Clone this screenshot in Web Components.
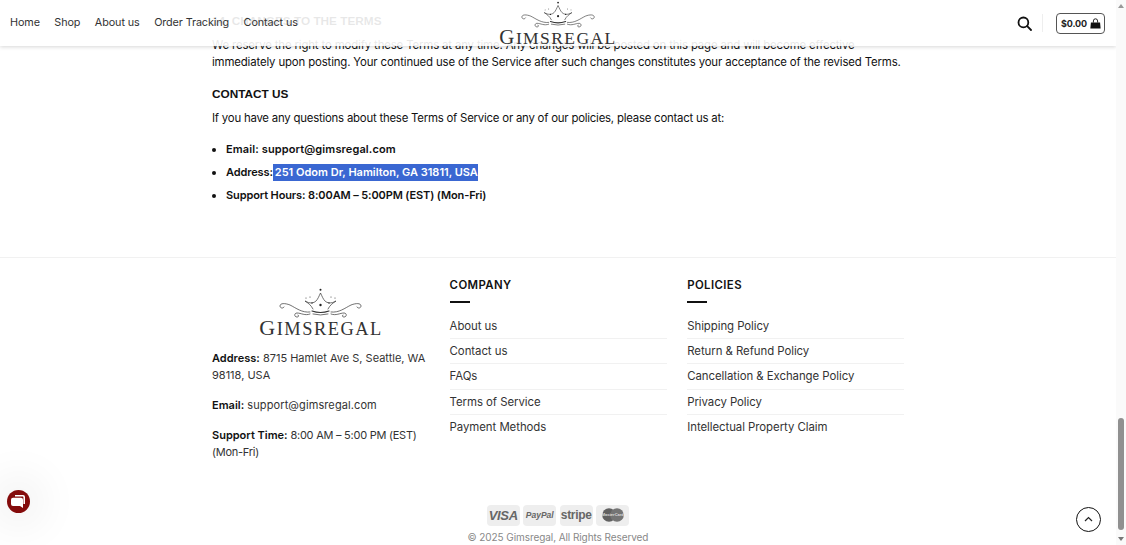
<!DOCTYPE html>
<html lang="en">
<head>
<meta charset="utf-8">
<title>Gimsregal</title>
<style>
    html, body { margin: 0; height: 100%; overflow: hidden; background: #fff; }
    body { font-family: Inter, "Open Sans", sans-serif; color: #111; }
    gims-page { height: 545px; }
</style>
</head>
<body>
<gims-page>
    <gims-header></gims-header>
    <legal-section></legal-section>
    <site-footer></site-footer>
</gims-page>
<chat-bubble></chat-bubble>
<back-top></back-top>

<script>
const CROWN = `
    <g fill="none" stroke="#333" stroke-width=".7" stroke-linecap="round">
        <path d="M34 21C32 17 29 15 26 13C31 16 35 15 37 13C39 11 40 8 41.5 5C43 8 44 11 46 13C48 15 52 16 57 13C54 15 51 17 49 21"/>
        <path stroke-width="1.2" d="M33 23Q41.5 26 50 23"/>
        <path d="M34 26Q41.5 28 49 26"/>
        <path d="M31 24C23 25 17 20 11 17C6 15 1 15 1 18C1 20 4 21 5 19"/>
        <path d="M31 26C26 28 22 25 18 25C15 25 15 29 18 29C20 29 20 27 19 27"/>
        <path transform="matrix(-1 0 0 1 83 0)" d="M31 24C23 25 17 20 11 17C6 15 1 15 1 18C1 20 4 21 5 19"/>
        <path transform="matrix(-1 0 0 1 83 0)" d="M31 26C26 28 22 25 18 25C15 25 15 29 18 29C20 29 20 27 19 27"/>
    </g>
    <g fill="#222">
        <circle cx="41.5" cy="1.8" r="1"/>
        <circle cx="41.5" cy="17" r="1.2"/>
        <circle cx="33" cy="15" r=".7"/><circle cx="50" cy="15" r=".7"/>
        <circle cx="27" cy="10" r=".5"/><circle cx="56" cy="10" r=".5"/>
        <circle cx="31" cy="9" r=".5"/><circle cx="52" cy="9" r=".5"/>
    </g>`;

class GimsLogo extends HTMLElement {
    connectedCallback() {
        const width = Number(this.getAttribute('width') || 122);
        const crown = Number(this.getAttribute('crown') || 84);
        const k = width / 122;
        this.attachShadow({ mode: 'open' }).innerHTML = `
            <style>
                :host { display: flex; flex-direction: column; align-items: center; width: ${width}px; color: #333; }
                svg { display: block; width: ${crown}px; height: ${crown * 30 / 84}px; }
                .name { font: ${18.4 * k}px/${17 * k}px "Liberation Serif", serif; letter-spacing: ${1.5 * k}px; white-space: nowrap; margin-top: ${1 * k}px; }
                .name b { font-weight: 400; font-size: ${22 * k}px; }
            </style>
            <svg viewBox="0 0 84 30" aria-hidden="true">${CROWN}</svg>
            <div class="name"><b>G</b>IMSREGAL</div>`;
    }
}

class GimsHeader extends HTMLElement {
    connectedCallback() {
        const links = ['Home', 'Shop', 'About us', 'Order Tracking', 'Contact us'];
        this.attachShadow({ mode: 'open' }).innerHTML = `
            <style>
                :host {
                    display: block; position: absolute; left: 0; right: 0; top: 0; height: 46px;
                    background: rgba(255,255,255,.9); box-shadow: 0 1px 4px rgba(0,0,0,.16);
                    font: 10.8px/1 Inter, sans-serif; letter-spacing: -.1px; color: #333; z-index: 5;
                }
                .bar { display: flex; align-items: center; justify-content: space-between; height: 100%; padding: 0 11px 0 10px; position: relative; }
                nav { display: flex; gap: 14.5px; }
                .logo { position: absolute; left: 500px; top: 1px; }
                .tools { display: flex; align-items: center; }
                .search { display: block; width: 15px; height: 15px; }
                .sep { width: 1px; height: 18px; background: #eee; margin: 0 13px 0 10px; }
                .cart {
                    display: flex; align-items: center; gap: 3px; height: 19px; padding: 0 3px 0 4px;
                    border: 1px solid #555; border-radius: 4px; font-size: 9px; letter-spacing: -.1px; font-weight: 700; color: #222;
                }
                .cart svg { width: 11px; height: 11px; display: block; }
            </style>
            <div class="bar">
                <nav>${links.map(link => `<span>${link}</span>`).join('')}</nav>
                <gims-logo class="logo" width="116" crown="75"></gims-logo>
                <div class="tools">
                    <svg class="search" viewBox="0 0 15 15" fill="none" stroke="#111" stroke-width="1.8" stroke-linecap="round"><circle cx="6.4" cy="6.4" r="4.9"/><path d="M10.2 10.2L14 14"/></svg>
                    <span class="sep"></span>
                    <div class="cart"><span>$0.00</span>
                        <svg viewBox="0 0 12 12"><path fill="#111" d="M1 5h10l.6 6.5H.4z"/><path fill="none" stroke="#111" d="M3.7 5V3.2a2.3 2.3 0 014.6 0V5"/></svg>
                    </div>
                </div>
            </div>`;
    }
}

class LegalSection extends HTMLElement {
    connectedCallback() {
        this.attachShadow({ mode: 'open' }).innerHTML = `
            <style>
                :host { display: block; padding: 13px 0 0 212px; width: 692px; font-size: 11.4px; line-height: 17px; color: #111; height: 244px; box-sizing: content-box; }
                h3 { margin: 0; font: 700 11.8px/17px "Liberation Sans", sans-serif; color: #111; }
                p { margin: 0; }
                .first { margin-top: 7px; white-space: nowrap; letter-spacing: -.145px; }
                .second { margin-top: 15px; }
                .intro { margin-top: 7px; letter-spacing: -.22px; white-space: nowrap; }
                ul { margin: 14px 0 0; padding: 0 0 0 14px; font-weight: 600; font-size: 11px; letter-spacing: -.12px; }
                li { margin-bottom: 6px; white-space: nowrap; }
                .mail { letter-spacing: .12px; }
                mark { background: #3a67d2; color: #fff; padding: 0 0 0 2px; display: inline-block; letter-spacing: 0; }
            </style>
            <h3>14. CHANGES TO THE TERMS</h3>
            <p class="first">We reserve the right to modify these Terms at any time. Any changes will be posted on this page and will become effective<br>immediately upon posting. Your continued use of the Service after such changes constitutes your acceptance of the revised Terms.</p>
            <h3 class="second">CONTACT US</h3>
            <p class="intro">If you have any questions about these Terms of Service or any of our policies, please contact us at:</p>
            <ul>
                <li class="mail">Email: support@gimsregal.com</li>
                <li>Address:<mark>251 Odom Dr, Hamilton, GA 31811, USA</mark></li>
                <li>Support Hours: 8:00AM – 5:00PM (EST) (Mon-Fri)</li>
            </ul>`;
    }
}

class FooterCol extends HTMLElement {
    connectedCallback() {
        const items = this.dataset.links.split(',').map(item => item.trim());
        this.attachShadow({ mode: 'open' }).innerHTML = `
            <style>
                :host { display: block; }
                h4 { margin: 0; font-size: 11.4px; line-height: 14px; font-weight: 600; letter-spacing: .4px; color: #111; }
                hr { width: 20px; height: 2px; margin: 8.5px 0 11px; border: 0; background: #111; }
                a { display: block; height: 24.4px; line-height: 24px; color: #333; border-bottom: 1px solid #f1f1f1; font-size: 11.4px; letter-spacing: -.05px; }
                a:last-child { border: 0; }
            </style>
            <h4>${this.dataset.title}</h4>
            <hr>
            ${items.map(item => `<a>${item}</a>`).join('')}`;
    }
}

class PayBadges extends HTMLElement {
    connectedCallback() {
        this.attachShadow({ mode: 'open' }).innerHTML = `
            <style>
                :host { display: flex; justify-content: center; gap: 3.5px; }
                span {
                    display: flex; align-items: center; justify-content: center; position: relative;
                    width: 33px; height: 21px; border-radius: 4px; background: #eee; color: #666;
                    font-family: "Liberation Sans", sans-serif; font-weight: 700; overflow: hidden;
                }
                .visa { font-size: 13px; font-style: italic; letter-spacing: -.3px; }
                .paypal { font-size: 8.5px; font-style: italic; }
                .stripe { font-size: 12px; letter-spacing: -.3px; }
                .mc svg { width: 24px; height: 14px; display: block; }
                .mc i { position: absolute; left: 0; right: 0; text-align: center; font: 700 4px/1 "Liberation Sans", sans-serif; color: #ddd; }
            </style>
            <span class="visa">VISA</span>
            <span class="paypal">PayPal</span>
            <span class="stripe">stripe</span>
            <span class="mc"><svg viewBox="0 0 24 14"><circle cx="8" cy="7" r="6.800" fill="#616161"/><circle cx="16" cy="7" r="6.800" fill="#747474"/></svg><i>MasterCard</i></span>`;
    }
}

class SiteFooter extends HTMLElement {
    connectedCallback() {
        this.attachShadow({ mode: 'open' }).innerHTML = `
            <style>
                :host { display: block; border-top: 1px solid #f1f1f1; padding: 20px 0 0 212px; font-size: 11px; line-height: 17px; color: #333; }
                .cols { display: grid; grid-template-columns: repeat(3, 217.3px); column-gap: 20.3px; width: 692px; }
                .about { padding-top: 10px; }
                .logo { margin: 0 0 12px 48px; }
                p { margin: 0 0 13.2px; }
                b { font-weight: 600; color: #111; font-size: 11px; letter-spacing: 0; }
                .mail { letter-spacing: .1px; }
                .time { letter-spacing: -.25px; }
                .bottom { width: 692px; margin-top: 30px; }
                pay-badges { margin: 0 0 1px; }
                .copy { text-align: center; color: #888; font-size: 10px; letter-spacing: -.08px; line-height: 20px; }
            </style>
            <div class="cols">
                <div class="about">
                    <gims-logo class="logo" width="122"></gims-logo>
                    <p><b>Address:</b> 8715 Hamlet Ave S, Seattle, WA 98118, USA</p>
                    <p class="mail"><b>Email:</b> support@gimsregal.com</p>
                    <p class="time"><b>Support Time:</b> 8:00 AM – 5:00 PM (EST) (Mon-Fri)</p>
                </div>
                <footer-col data-title="COMPANY" data-links="About us, Contact us, FAQs, Terms of Service, Payment Methods"></footer-col>
                <footer-col data-title="POLICIES" data-links="Shipping Policy, Return &amp; Refund Policy, Cancellation &amp; Exchange Policy, Privacy Policy, Intellectual Property Claim"></footer-col>
            </div>
            <div class="bottom">
                <pay-badges></pay-badges>
                <div class="copy">© 2025 Gimsregal, All Rights Reserved</div>
            </div>`;
    }
}

class PageScrollbar extends HTMLElement {
    connectedCallback() {
        this.attachShadow({ mode: 'open' }).innerHTML = `
            <style>
                :host { display: flex; flex-direction: column; align-items: center; justify-content: space-between; position: relative; width: 10px; flex: none; background: #fafafa; padding: 4px 0; box-sizing: border-box; }
                .up, .down { width: 0; height: 0; border-left: 3.5px solid transparent; border-right: 3.5px solid transparent; }
                .up { border-bottom: 4px solid #999; }
                .down { border-top: 4px solid #777; }
                .thumb { position: absolute; left: 2px; top: 418px; width: 6px; height: 112px; border-radius: 3px; background: #909090; }
            </style>
            <i class="up"></i><i class="thumb"></i><i class="down"></i>`;
    }
}

class GimsPage extends HTMLElement {
    connectedCallback() {
        this.attachShadow({ mode: 'open' }).innerHTML = `
            <style>
                :host { display: flex; height: 545px; overflow: hidden; }
                .view { flex: 1; min-width: 0; position: relative; overflow: hidden; }
            </style>
            <div class="view"><slot></slot></div>
            <page-scrollbar></page-scrollbar>`;
    }
}

class ChatBubble extends HTMLElement {
    connectedCallback() {
        this.attachShadow({ mode: 'open' }).innerHTML = `
            <style>
                :host {
                    position: fixed; left: 6.5px; top: 489.5px; width: 23px; height: 23px; border-radius: 50%;
                    background: #840b0b; display: flex; align-items: center; justify-content: center;
                    box-shadow: 0 0 40px 16px rgba(0,0,0,.05); z-index: 6;
                }
                svg { width: 14px; height: 13px; display: block; }
            </style>
            <svg viewBox="0 0 14 13"><path fill="#fff" d="M4 0h8a2 2 0 012 2v7h-1.6V2.2a.6.6 0 00-.6-.6H4z"/><path fill="#fff" d="M2 2.800h8a2 2 0 012 2V13l-3-2H2a2 2 0 01-2-2V4.800a2 2 0 012-2z"/></svg>`;
    }
}

class BackTop extends HTMLElement {
    connectedCallback() {
        this.attachShadow({ mode: 'open' }).innerHTML = `
            <style>
                :host {
                    position: fixed; left: 1076px; top: 506.500px; width: 25px; height: 25px; box-sizing: border-box;
                    border: 1.6px solid #111; border-radius: 50%; background: #fff;
                    display: flex; align-items: center; justify-content: center; z-index: 6;
                }
                svg { width: 9px; height: 6px; display: block; }
            </style>
            <svg viewBox="0 0 9 6" fill="none" stroke="#222" stroke-width="1.200"><path d="M1 5l3.500-3.500L8 5"/></svg>`;
    }
}

customElements.define('gims-logo', GimsLogo);
customElements.define('gims-header', GimsHeader);
customElements.define('legal-section', LegalSection);
customElements.define('footer-col', FooterCol);
customElements.define('pay-badges', PayBadges);
customElements.define('site-footer', SiteFooter);
customElements.define('page-scrollbar', PageScrollbar);
customElements.define('gims-page', GimsPage);
customElements.define('chat-bubble', ChatBubble);
customElements.define('back-top', BackTop);
</script>
</body>
</html>
